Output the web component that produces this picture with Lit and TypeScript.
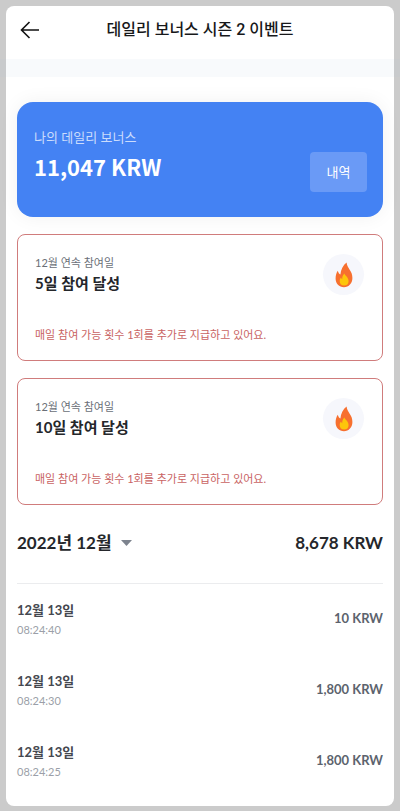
import { LitElement, html, css } from "lit";
import { customElement } from "lit/decorators.js";

interface Mission {
  period: string;
  title: string;
  note: string;
}

interface Entry {
  date: string;
  time: string;
  amount: string;
}

const NOTE = "매일 참여 가능 횟수 1회를 추가로 지급하고 있어요.";

const MISSIONS: Mission[] = [
  { period: "12월 연속 참여일", title: "5일 참여 달성", note: NOTE },
  { period: "12월 연속 참여일", title: "10일 참여 달성", note: NOTE },
];

const ENTRIES: Entry[] = [
  { date: "12월 13일", time: "08:24:40", amount: "10 KRW" },
  { date: "12월 13일", time: "08:24:30", amount: "1,800 KRW" },
  { date: "12월 13일", time: "08:24:25", amount: "1,800 KRW" },
];

@customElement("mission-card")
export class MissionCard extends LitElement {
  static properties = { mission: { attribute: false } };
  declare mission: Mission;

  static styles = css`
    :host {
      display: block;
    }
    .card {
      box-sizing: border-box;
      border: 1px solid #d07c7c;
      border-radius: 8px;
      padding: 19px 18px 16px 17px;
    }
    .top {
      display: flex;
      justify-content: space-between;
      align-items: flex-start;
    }
    .period {
      margin: 0;
      font-size: 11px;
      line-height: 17px;
      color: #6a6f77;
    }
    .title {
      margin: 0;
      font-size: 15px;
      line-height: 24px;
      font-weight: 700;
      color: #25272b;
    }
    .badge {
      display: flex;
      align-items: center;
      justify-content: center;
      width: 41px;
      height: 41px;
      border-radius: 50%;
      background: #f6f7fc;
    }
    .note {
      margin: 31px 0 0;
      font-size: 11px;
      line-height: 18px;
      color: #c96363;
    }
  `;

  render() {
    const { period, title, note } = this.mission;
    return html`
      <article class="card">
        <div class="top">
          <div>
            <p class="period">${period}</p>
            <h2 class="title">${title}</h2>
          </div>
          <span class="badge">
            <svg width="18" height="26" viewBox="0 0 18 26" aria-hidden="true">
              <path
                fill="#f7702f"
                d="M11.6 0.6C11.8 3.4 13.1 5.4 14.8 8C16.4 10.4 17.4 12.6 17.4 16C17.4 21.4 13.8 25.2 9 25.2C4 25.2 0.6 21.6 0.6 16.6C0.6 13.4 1.4 10.8 2.8 8.8C3.3 10.8 4.2 12 5.4 12.6C5.8 7.6 8 3.4 11.6 0.6Z"
              />
              <path
                fill="#fdc60b"
                d="M9.4 11.6C9.8 13.4 13.6 15.2 13.6 19.2C13.6 22 11.8 23.6 9.2 23.6C6.6 23.6 4.7 21.9 4.7 19.2C4.7 17.6 5.2 16.4 6 15.6C6.2 16.5 6.6 17 7.2 17.3C7.2 15 7.8 13 9.4 11.6Z"
              />
            </svg>
          </span>
        </div>
        <p class="note">${note}</p>
      </article>
    `;
  }
}

@customElement("app-root")
export class AppRoot extends LitElement {
  static styles = css`
    :host {
      box-sizing: border-box;
      display: flex;
      flex-direction: column;
      min-height: 100vh;
      padding: 6px 6px 5px;
      background: #cbcbcb;
      font-family: Lato, "Noto Sans CJK KR", sans-serif;
      color: #25272b;
    }
    .screen {
      flex: 1;
      background: #fff;
      border-radius: 8px;
    }
    .header {
      display: grid;
      grid-template-columns: 47px 1fr 47px;
      align-items: center;
      height: 47px;
      padding-bottom: 6px;
    }
    .back {
      display: flex;
      align-items: center;
      justify-content: center;
      height: 40px;
      padding: 0;
      border: 0;
      background: none;
      color: #111;
    }
    .heading {
      margin: 0;
      text-align: center;
      font-family: Roboto, "Noto Sans CJK KR", sans-serif;
      font-size: 16px;
      line-height: 24px;
      font-weight: 500;
      color: #17181a;
    }
    .band {
      height: 18px;
      margin: 0 -6px;
      background: rgba(170, 185, 215, 0.08);
    }
    .body {
      display: flex;
      flex-direction: column;
      gap: 17px;
      padding: 25px 11px 0;
    }
    .balance {
      display: flex;
      justify-content: space-between;
      padding: 25px 16px 25px 17px;
      border-radius: 16px;
      background: #4482f3;
      color: #fff;
      box-shadow: 0 0 20px rgba(0, 0, 0, 0.06);
    }
    .label {
      margin: 0;
      font-size: 13px;
      line-height: 20px;
      color: #cbdcfc;
    }
    .value {
      margin: 0;
      padding-bottom: 7px;
      font-family: "Noto Sans CJK KR", sans-serif;
      font-size: 22px;
      line-height: 38px;
      font-weight: 700;
    }
    .history {
      align-self: flex-end;
      width: 57px;
      height: 40px;
      padding: 0 0 2px;
      border: 0;
      border-radius: 4px;
      background: #6a9af6;
      color: #fff;
      font: inherit;
      font-size: 13px;
    }
    .summary {
      display: flex;
      align-items: center;
      justify-content: space-between;
      margin: 0 11px;
      padding: 24px 0 26px;
      border-bottom: 1px solid #ebecee;
      font-size: 17px;
      line-height: 28px;
      font-weight: 700;
    }
    .picker {
      display: flex;
      align-items: center;
      gap: 9px;
    }
    .month {
      appearance: none;
      height: 28px;
      padding: 0;
      border: 0;
      background: none;
      color: inherit;
      font: inherit;
    }
    .list {
      display: flex;
      flex-direction: column;
      gap: 31px;
      margin: 0;
      padding: 15px 11px 22px;
      list-style: none;
    }
    .entry {
      display: flex;
      align-items: center;
      justify-content: space-between;
    }
    .date {
      font-size: 13px;
      line-height: 22px;
      font-weight: 700;
      color: #45484f;
    }
    .time {
      font-size: 11px;
      line-height: 18px;
      color: #9b9fa8;
    }
    .amount {
      padding-bottom: 2px;
      font-size: 13px;
      line-height: 20px;
      font-weight: 700;
      color: #5c636d;
    }
  `;

  render() {
    return html`
      <main class="screen">
        <header class="header">
          <button class="back" type="button" aria-label="뒤로">
            <svg width="20" height="18" viewBox="0 0 20 18" fill="none" stroke="currentColor" stroke-width="1.6" aria-hidden="true">
              <path d="M19 9H1.5M9.5 1L1.5 9L9.5 17" />
            </svg>
          </button>
          <h1 class="heading">데일리 보너스 시즌 2 이벤트</h1>
        </header>
        <div class="band"></div>
        <div class="body">
          <section class="balance">
            <div>
              <p class="label">나의 데일리 보너스</p>
              <p class="value">11,047 KRW</p>
            </div>
            <button class="history" type="button">내역</button>
          </section>
          ${MISSIONS.map((m) => html`<mission-card .mission=${m}></mission-card>`)}
        </div>
        <div class="summary">
          <div class="picker">
            <select class="month" aria-label="월 선택">
              <option>2022년 12월</option>
            </select>
            <svg width="11" height="6" viewBox="0 0 11 6" aria-hidden="true">
              <path d="M0 0H11L5.5 6Z" fill="#7d838e" />
            </svg>
          </div>
          <span>8,678 KRW</span>
        </div>
        <ul class="list">
          ${ENTRIES.map(
            (e) => html`
              <li class="entry">
                <div>
                  <div class="date">${e.date}</div>
                  <div class="time">${e.time}</div>
                </div>
                <span class="amount">${e.amount}</span>
              </li>
            `
          )}
        </ul>
      </main>
    `;
  }
}
